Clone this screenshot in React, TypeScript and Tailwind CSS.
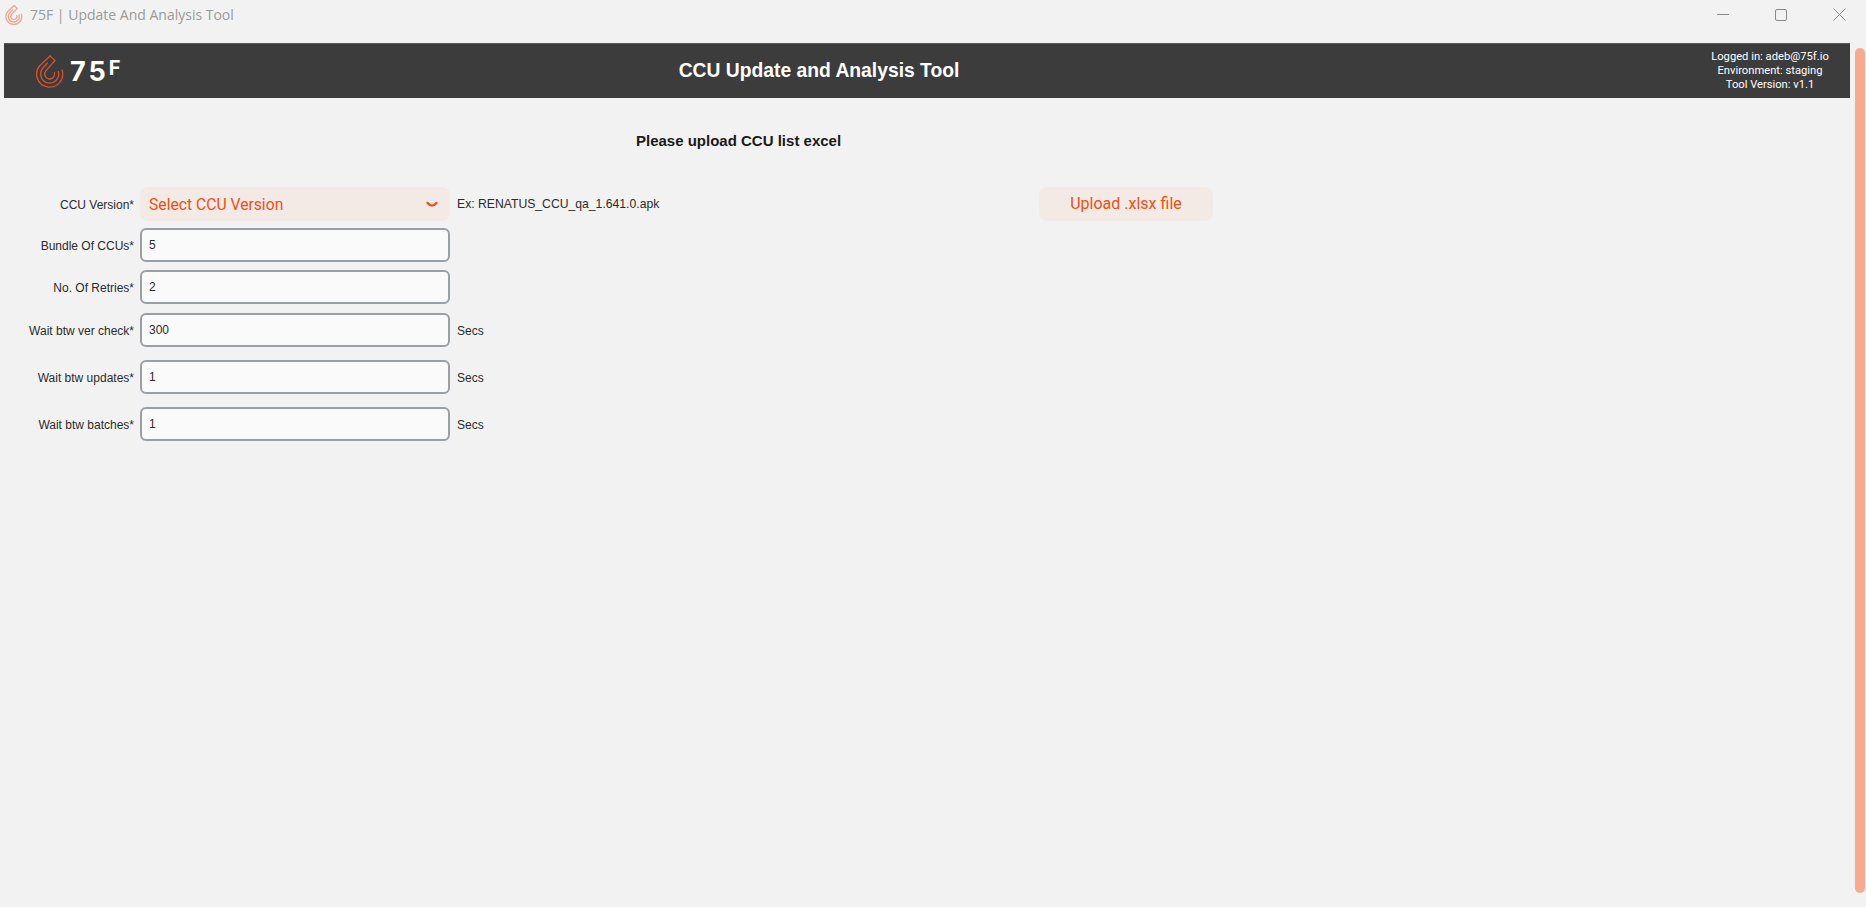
const sans = "font-['Liberation_Sans',sans-serif]";

const fields = [
  { label: "Bundle Of CCUs*", value: "5", gap: "mt-[7px]", unit: "" },
  { label: "No. Of Retries*", value: "2", gap: "mt-[8px]", unit: "" },
  { label: "Wait btw ver check*", value: "300", gap: "mt-[9px]", unit: "Secs" },
  { label: "Wait btw updates*", value: "1", gap: "mt-[13px]", unit: "Secs" },
  { label: "Wait btw batches*", value: "1", gap: "mt-[13px]", unit: "Secs" },
];

function DropMark({ className }: { className?: string }) {
  return (
    <svg viewBox="0 0 28 33" fill="none" stroke="currentColor" strokeWidth="1.3" strokeLinecap="round" className={className}>
      <path d="M14 1 L3.5 11 A13 13 0 1 0 26 15" />
      <path d="M11.5 8 L7 13 A9 9 0 1 0 22.3 16.5" />
      <path d="M14 1 L19 5.5 L10 15.6 A5 5 0 1 0 18.5 17.7" />
    </svg>
  );
}

function WindowControls() {
  return (
    <div className="flex items-center">
      <svg width="12" height="12" viewBox="0 0 12 12" className="mr-[46px] text-[#8a8a8a]">
        <path d="M0 5.5H12" stroke="currentColor" />
      </svg>
      <svg width="12" height="12" viewBox="0 0 12 12" className="mr-[46px] text-[#8a8a8a]">
        <rect x="0.5" y="0.5" width="11" height="11" rx="1.5" fill="none" stroke="currentColor" />
      </svg>
      <svg width="13" height="13" viewBox="0 0 13 13" className="text-[#8a8a8a]">
        <path d="M0.5 0.5L12.5 12.5M12.5 0.5L0.5 12.5" stroke="currentColor" />
      </svg>
    </div>
  );
}

function Label({ children }: { children: string }) {
  return <div className="w-[130px] shrink-0 pt-px text-right text-xs text-[#2b2b2b]">{children}</div>;
}

export default function App() {
  return (
    <div className={`flex h-[907px] w-[1866px] flex-col overflow-hidden bg-[#f2f2f2] ${sans}`}>
      <div className="flex h-[43px] shrink-0 items-start justify-between pr-[20px]">
        <div className="flex items-center pl-[5px] pt-[5px]">
          <DropMark className="h-[20px] w-[18px] stroke-[2.2] text-[#f2a68f]" />
          <span className="ml-[7px] font-['Open_Sans',sans-serif] text-sm text-[#9a9a9a]">75F | Update And Analysis Tool</span>
        </div>
        <div className="pt-[8px]">
          <WindowControls />
        </div>
      </div>

      <div className="flex min-h-0 flex-1">
        <div className="w-[1850px] shrink-0 pl-[4px]">
          <header className="flex h-[55px] items-center border-t border-[#5a5a5a] bg-[#3c3c3c] text-white">
            <div className="flex w-[674px] shrink-0 items-center pl-[32px]">
              <DropMark className="h-[33px] w-[28px] text-[#d9512c]" />
              <span className="ml-[6px] flex items-start font-['Inter',sans-serif] font-bold">
                <span className="text-[27px] leading-[27px] tracking-[3px]">75</span>
                <span className="text-[20px] leading-[21px]">F</span>
              </span>
            </div>
            <h1 className="w-[282px] shrink-0 text-center text-[19.3px] font-bold whitespace-nowrap">CCU Update and Analysis Tool</h1>
            <div className="flex-1 pl-[730px] text-center font-['Roboto',sans-serif] text-[11.2px] leading-[14px]">
              <div>Logged in: adeb@75f.io</div>
              <div>Environment: staging</div>
              <div>Tool Version: v1.1</div>
            </div>
          </header>

          <main className="pt-[33px]">
            <p className="pl-[632px] text-[15px] leading-5 font-bold text-[#1a1a1a]">Please upload CCU list excel</p>

            <div className="mt-[36px] flex h-[34px] items-center">
              <Label>CCU Version*</Label>
              <button className="ml-[6px] flex h-[34px] w-[310px] shrink-0 items-center justify-between rounded-[8px] bg-[#f3eae6] pl-[9px] pr-[12px] font-['Roboto',sans-serif] text-[15.7px] text-[#f04e13]">
                <span className="pt-px">Select CCU Version</span>
                <svg width="12" height="6" viewBox="0 0 12 6" fill="none" stroke="currentColor" strokeWidth="2.2">
                  <path d="M1 1.2C3 4 5 4.6 6 4.6S9 4 11 1.2" />
                </svg>
              </button>
              <span className="ml-[7px] w-[582px] shrink-0 pt-px text-[12.2px] text-[#2b2b2b]">Ex: RENATUS_CCU_qa_1.641.0.apk</span>
              <button className="h-[34px] w-[174px] shrink-0 rounded-[8px] bg-[#f3eae6] font-['Roboto',sans-serif] text-base text-[#f04e13]">Upload .xlsx file</button>
            </div>

            {fields.map((field) => (
              <div key={field.label} className={`flex h-[34px] items-center ${field.gap}`}>
                <Label>{field.label}</Label>
                <input
                  readOnly
                  value={field.value}
                  className="ml-[6px] h-[34px] w-[310px] shrink-0 rounded-[6px] border-2 border-[#9a9ea5] bg-[#fafafa] px-[7px] text-xs text-[#2b2b2b] outline-none"
                />
                {field.unit && <span className="ml-[7px] pt-px text-xs text-[#2b2b2b]">{field.unit}</span>}
              </div>
            ))}
          </main>
        </div>

        <div className="ml-[5px] mt-[5px] mb-[14px] w-[10px] rounded-full bg-[#f6ab90]" />
      </div>
    </div>
  );
}
